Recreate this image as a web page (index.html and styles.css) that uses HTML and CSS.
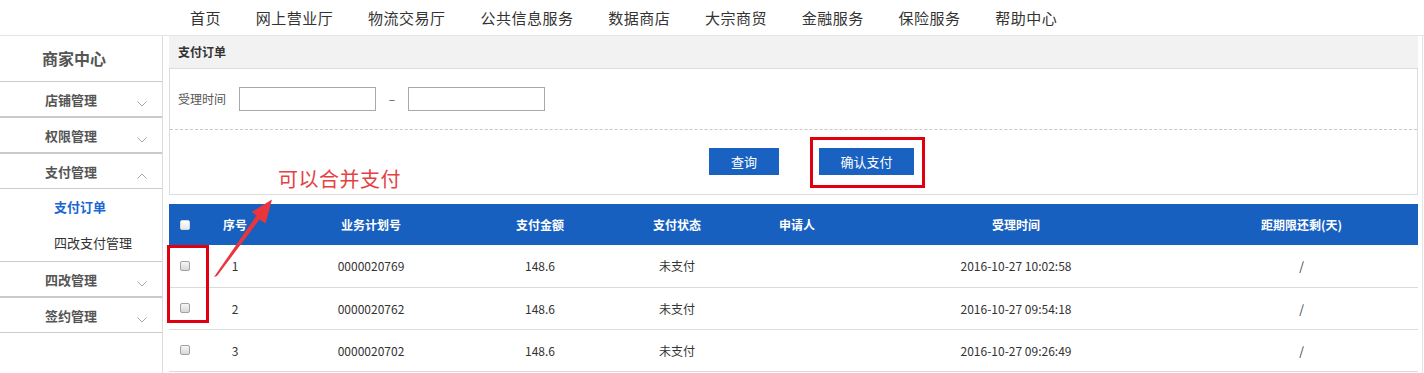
FILE: index.html
```html
<!DOCTYPE html>
<html lang="zh-CN">
<head>
<meta charset="utf-8">
<title>支付订单</title>
<link rel="stylesheet" href="styles.css">
</head>
<body>
<div class="page">
  <nav class="topnav">
    <a class="nav-item">首页</a>
    <a class="nav-item">网上营业厅</a>
    <a class="nav-item">物流交易厅</a>
    <a class="nav-item">公共信息服务</a>
    <a class="nav-item">数据商店</a>
    <a class="nav-item">大宗商贸</a>
    <a class="nav-item">金融服务</a>
    <a class="nav-item">保险服务</a>
    <a class="nav-item">帮助中心</a>
  </nav>
  <div class="layout">
    <aside class="sidebar">
      <div class="side-title">商家中心</div>
      <div class="menu-item"><span>店铺管理</span><svg class="chev" width="10" height="6" viewBox="0 0 10 6"><polyline points="0.5,0.5 5,5 9.5,0.5" fill="none" stroke="#a8a8a8" stroke-width="1"/></svg></div>
      <div class="menu-item"><span>权限管理</span><svg class="chev" width="10" height="6" viewBox="0 0 10 6"><polyline points="0.5,0.5 5,5 9.5,0.5" fill="none" stroke="#a8a8a8" stroke-width="1"/></svg></div>
      <div class="menu-item"><span>支付管理</span><svg class="chev" width="10" height="6" viewBox="0 0 10 6"><polyline points="0.5,5.5 5,1 9.5,5.5" fill="none" stroke="#a8a8a8" stroke-width="1"/></svg></div>
      <div class="submenu">
        <div class="sub-item active">支付订单</div>
        <div class="sub-item">四改支付管理</div>
      </div>
      <div class="menu-item"><span>四改管理</span><svg class="chev" width="10" height="6" viewBox="0 0 10 6"><polyline points="0.5,0.5 5,5 9.5,0.5" fill="none" stroke="#a8a8a8" stroke-width="1"/></svg></div>
      <div class="menu-item"><span>签约管理</span><svg class="chev" width="10" height="6" viewBox="0 0 10 6"><polyline points="0.5,0.5 5,5 9.5,0.5" fill="none" stroke="#a8a8a8" stroke-width="1"/></svg></div>
    </aside>
    <main class="main">
      <div class="panel-head">支付订单</div>
      <div class="panel-body">
        <div class="form-row">
          <label class="form-label">受理时间</label>
          <input class="date-input" type="text">
          <span class="dash">–</span>
          <input class="date-input" type="text">
        </div>
        <div class="btn-row">
          <button class="btn">查询</button>
          <button class="btn btn-wide">确认支付</button>
        </div>
      </div>
      <table class="grid">
        <colgroup>
          <col style="width:32px"><col style="width:68px"><col style="width:204px"><col style="width:134px"><col style="width:140px"><col style="width:100px"><col style="width:338px"><col style="width:233px">
        </colgroup>
        <thead>
          <tr>
            <th><input class="cb cb-head" type="checkbox"></th>
            <th>序号</th><th>业务计划号</th><th>支付金额</th><th>支付状态</th><th>申请人</th><th>受理时间</th><th>距期限还剩(天)</th>
          </tr>
        </thead>
        <tbody>
          <tr><td><input class="cb" type="checkbox"></td><td>1</td><td>0000020769</td><td>148.6</td><td>未支付</td><td></td><td>2016-10-27 10:02:58</td><td>/</td></tr>
          <tr><td><input class="cb" type="checkbox"></td><td>2</td><td>0000020762</td><td>148.6</td><td>未支付</td><td></td><td>2016-10-27 09:54:18</td><td>/</td></tr>
          <tr><td><input class="cb" type="checkbox"></td><td>3</td><td>0000020702</td><td>148.6</td><td>未支付</td><td></td><td>2016-10-27 09:26:49</td><td>/</td></tr>
        </tbody>
      </table>
    </main>
  </div>

  <div class="mark mark-btn"></div>
  <div class="mark mark-cb"></div>
  <div class="note">可以合并支付</div>
  <svg class="arrow" width="1424" height="373" viewBox="0 0 1424 373">
    <polygon points="214,277 217,276 259.5,219.5 265.5,223.5 272,199.5 251.5,212 256.5,215.5" fill="#e8363c"/>
  </svg>
</div>
</body>
</html>
```
FILE: styles.css
```css
* { box-sizing: border-box; }
html, body { margin: 0; padding: 0; background: #fff; }
body {
  font-family: "Microsoft YaHei", "Noto Sans CJK SC", "Noto Sans", sans-serif;
  color: #333;
  font-size: 12px;
}
.page { position: relative; width: 1424px; height: 373px; overflow: hidden; }

.topnav {
  display: flex;
  height: 36px;
  border-bottom: 1px solid #e4e4e4;
  padding-left: 172.6px;
}
.nav-item {
  padding: 0 17.4px;
  line-height: 35px;
  font-size: 15px;
  letter-spacing: 0.5px;
  color: #333;
  text-decoration: none;
}

.layout { display: flex; height: 337px; }

.sidebar {
  width: 163px;
  flex: none;
  border-right: 1px solid #dcdcdc;
}
.side-title {
  height: 45px;
  line-height: 45px;
  padding-left: 42px;
  font-size: 16px;
  font-weight: bold;
  color: #555;
}
.menu-item {
  display: flex;
  align-items: center;
  height: 36px;
  border-top: 1px solid #cbcbcb;
  border-bottom: 1px solid #cbcbcb;
  padding-left: 45px;
  font-size: 13px;
  font-weight: bold;
  color: #555;
}
.chev { margin-left: auto; margin-right: 15px; margin-top: 9px; }
.sub-item {
  height: 36px;
  line-height: 36px;
  padding-left: 54px;
  font-size: 13px;
  color: #333;
}
.sub-item.active { color: #1a66d2; font-weight: bold; }

.main {
  flex: 1;
  padding: 0 4px 0 6px;
  border-right: 1px solid #e6e6e6;
  margin-right: 1px;
}
.panel-head {
  height: 33px;
  line-height: 32px;
  background: #f2f2f2;
  border-bottom: 1px solid #dcdcdc;
  padding-left: 9px;
  font-size: 12px;
  font-weight: bold;
  color: #333;
}
.panel-body {
  border: 1px solid #dcdcdc;
  border-top: none;
  height: 126px;
}
.form-row {
  display: flex;
  align-items: center;
  height: 61px;
  padding: 18px 0 19px 8px;
  border-bottom: 1px dashed #c8c8c8;
}
.form-label { font-size: 12px; color: #555; margin-right: 13px; }
.date-input {
  width: 137px;
  height: 24px;
  border: 1px solid #a9a9a9;
  padding: 0 4px;
  font: inherit;
  outline: none;
}
.dash { width: 32px; text-align: center; color: #555; font-size: 12px; }
.btn-row {
  display: flex;
  justify-content: center;
  gap: 40px;
  padding: 18px 0 0 36px;
}
.btn {
  width: 70px;
  height: 27px;
  border: none;
  background: #1a62c2;
  color: #fff;
  font-family: inherit;
  font-size: 13px;
  padding: 0;
}
.btn-wide { width: 95px; }

.grid {
  width: 1249px;
  margin-top: 9px;
  border-collapse: collapse;
  table-layout: fixed;
}
.grid th {
  height: 41px;
  background: #1760c0;
  color: #fff;
  font-weight: bold;
  font-size: 12px;
  text-align: center;
  padding: 0;
}
.grid td {
  height: 42px;
  border-bottom: 1px solid #dcdcdc;
  text-align: center;
  font-size: 12px;
  color: #333;
  padding: 0;
}
.cb {
  appearance: none;
  -webkit-appearance: none;
  width: 10px;
  height: 10px;
  margin: 0;
  border: 1px solid #a2a2a2;
  border-radius: 2px;
  background: linear-gradient(#f6f6f6, #d8d8d8);
  vertical-align: middle;
  position: relative;
  top: -2px;
}
.cb-head {
  border-color: #d6d6d6;
  background: linear-gradient(#ffffff, #e6e6e6);
}

.mark {
  position: absolute;
  border: 3px solid #e1000f;
}
.mark-btn { left: 810px; top: 137px; width: 115px; height: 51px; }
.mark-cb { left: 167px; top: 245px; width: 42px; height: 78px; }
.note {
  position: absolute;
  left: 278px;
  top: 166px;
  font-size: 20px;
  line-height: 26px;
  color: #e4413f;
  letter-spacing: 0.5px;
}
.arrow { position: absolute; left: 0; top: 0; pointer-events: none; }
```
